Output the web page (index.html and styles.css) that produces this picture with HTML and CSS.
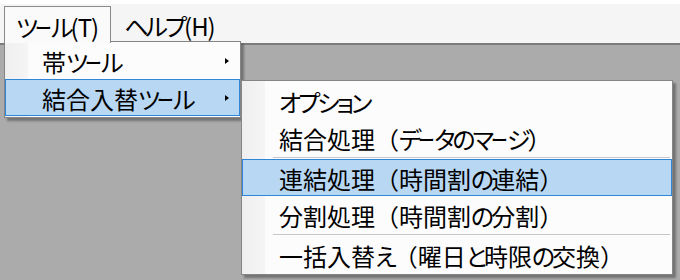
FILE: index.html
```html
<!DOCTYPE html>
<html lang="ja">
<head>
<meta charset="utf-8">
<link rel="stylesheet" href="styles.css">
</head>
<body>
<div class="window">
  <div class="menubar">
    <div class="top-item open"><span class="label"><span class="k">ツ<span class="ch">ー</span>ル</span><span class="a">(T)</span></span></div>
    <div class="top-item"><span class="label"><span class="k">ヘルプ</span><span class="a">(H)</span></span></div>
  </div>
  <div class="client"></div>

  <div class="menu dropdown">
    <div class="item"><span class="label">帯<span class="k">ツ<span class="ch">ー</span>ル</span></span><span class="arrow"></span></div>
    <div class="item hot"><span class="label">結合入替<span class="k">ツ<span class="ch">ー</span>ル</span></span><span class="arrow"></span></div>
  </div>

  <div class="menu submenu">
    <div class="item"><span class="label"><span class="k">オプション</span></span></div>
    <div class="item"><span class="label">結合処理（<span class="k">デ<span class="ch">ー</span>タのマ<span class="ch">ー</span>ジ</span>）</span></div>
    <div class="sep"></div>
    <div class="item hot"><span class="label">連結処理（時間割<span class="k">の</span>連結）</span></div>
    <div class="item"><span class="label">分割処理（時間割<span class="k">の</span>分割）</span></div>
    <div class="sep"></div>
    <div class="item"><span class="label">一括入替<span class="k">え</span>（曜日<span class="k">と</span>時限<span class="k">の</span>交換）</span></div>
  </div>
</div>
</body>
</html>
```

FILE: styles.css
```css
html, body {
  margin: 0;
  padding: 0;
  background: #ffffff;
}

body {
  font-family: "Noto Sans CJK JP", "Noto Sans", sans-serif;
  font-size: 24px;
  color: #000;
}

.window {
  position: relative;
  width: 680px;
  height: 280px;
  overflow: hidden;
  display: flex;
  flex-direction: column;
}

.menubar {
  margin-top: 4px;
  height: 39px;
  background: #f5f5f5;
  border-bottom: 2px solid #7c7c7c;
  display: flex;
  align-items: flex-start;
  padding-left: 4px;
}

.top-item {
  margin-top: 2px;
  height: 35px;
  box-sizing: border-box;
  border: 1px solid transparent;
  border-bottom: none;
  padding: 0 12px 0 11px;
  display: flex;
  align-items: center;
  line-height: 1;
}

.top-item + .top-item {
  padding-left: 12px;
}

.top-item .label {
  top: 2px;
}

.top-item.open {
  background: #fafafa;
  border-color: #8a8a8a;
  height: 37px;
  position: relative;
  z-index: 3;
}

.client {
  flex: 1;
  background: #ababab;
}

.menu {
  position: absolute;
  box-sizing: border-box;
  border: 1px solid #858585;
  background: linear-gradient(to right, #efefef 0, #f5f5f5 23px, #fcfcfc 23px);
  box-shadow: 3px 3px 2px rgba(0, 0, 0, 0.32);
}

.dropdown {
  left: 4px;
  top: 41px;
  width: 237px;
  height: 77px;
  padding: 0 0 1px 0;
  z-index: 2;
}

.submenu {
  left: 241px;
  top: 80px;
  width: 432px;
  height: 195px;
  padding-top: 1px;
  z-index: 4;
}

.item {
  height: 37px;
  box-sizing: border-box;
  border: 1px solid transparent;
  padding-left: 36px;
  padding-right: 10px;
  display: flex;
  align-items: center;
  justify-content: space-between;
  line-height: 1;
}

.item.hot {
  background: #b8d7f3;
  border-color: #2f86d8;
}

.label {
  white-space: nowrap;
  position: relative;
  top: 1px;
}

.k {
  font-feature-settings: "palt";
  letter-spacing: -3px;
}

.ch {
  display: inline-block;
  width: 17px;
  letter-spacing: 0;
  transform: scaleX(0.7);
  transform-origin: 0 50%;
  margin-right: -1px;
}

.a {
  letter-spacing: -1px;
}

.arrow {
  width: 0;
  height: 0;
  border-top: 3.5px solid transparent;
  border-bottom: 3.5px solid transparent;
  border-left: 4px solid #000;
}

.sep {
  height: 3px;
  display: flex;
  align-items: center;
  padding-left: 31px;
  padding-right: 2px;
}

.sep::before {
  content: "";
  flex: 1;
  height: 1px;
  background: #c6c6c6;
}
```
